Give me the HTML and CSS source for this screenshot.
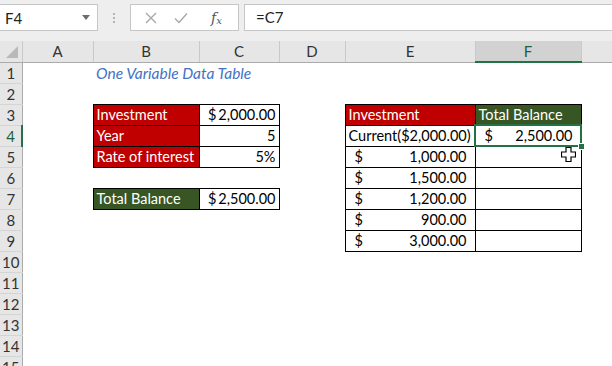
FILE: index.html
```html
<!doctype html>
<html>
  <head>
    <meta charset="utf-8">
    <title>One Variable Data Table</title>
    <link rel="stylesheet" href="styles.css">
  </head>
  <body>
    <div class="formula-bar">
      <div class="name-box">
        <span>F4</span>
        <svg class="caret" width="8" height="5" viewBox="0 0 8 5"><polygon points="0,0 8,0 4,5" fill="#6d6d6d"/></svg>
      </div>
      <div class="grip"><i></i><i></i><i></i></div>
      <div class="fx-buttons">
        <svg width="12" height="12" viewBox="0 0 12 12"><path d="M1 1L11 11M11 1L1 11" stroke="#a8a8a8" stroke-width="1.4" fill="none"/></svg>
        <svg width="14" height="12" viewBox="0 0 14 12"><path d="M1 6.5L5 10.5L13 1.5" stroke="#a8a8a8" stroke-width="1.4" fill="none"/></svg>
        <span class="fx">f<sub>x</sub></span>
      </div>
      <div class="formula">=C7</div>
    </div>

    <table class="sheet">
      <colgroup>
        <col class="c-head">
        <col class="c-a">
        <col class="c-b">
        <col class="c-c">
        <col class="c-d">
        <col class="c-e">
        <col class="c-f">
        <col>
      </colgroup>
      <thead>
        <tr>
          <th class="corner"><svg width="12" height="12" viewBox="0 0 12 12"><polygon points="12,0 12,12 0,12" fill="#b9b9b9"/></svg></th>
          <th>A</th><th>B</th><th>C</th><th>D</th><th>E</th><th class="picked">F</th><th class="last"></th>
        </tr>
      </thead>
      <tbody>
        <tr><th>1</th><td></td><td class="title" colspan="2">One Variable Data Table</td><td></td><td></td><td></td><td></td></tr>
        <tr><th>2</th><td></td><td></td><td></td><td></td><td></td><td></td><td></td></tr>
        <tr>
          <th>3</th><td></td>
          <td class="box red">Investment</td><td class="box num money">$<span>2,000.00</span></td>
          <td></td>
          <td class="box red">Investment</td><td class="box green">Total Balance</td><td></td>
        </tr>
        <tr>
          <th class="picked">4</th><td></td>
          <td class="box red">Year</td><td class="box num">5</td>
          <td></td>
          <td class="box">Current($2,000.00)</td>
          <td class="box active"><div class="acct"><span>$</span><span>2,500.00</span></div></td><td></td>
        </tr>
        <tr>
          <th>5</th><td></td>
          <td class="box red">Rate of interest</td><td class="box num">5%</td>
          <td></td>
          <td class="box"><div class="acct"><span>$</span><span>1,000.00</span></div></td><td class="box"></td><td></td>
        </tr>
        <tr>
          <th>6</th><td></td><td></td><td></td><td></td>
          <td class="box"><div class="acct"><span>$</span><span>1,500.00</span></div></td><td class="box"></td><td></td>
        </tr>
        <tr>
          <th>7</th><td></td>
          <td class="box green">Total Balance</td><td class="box num money">$<span>2,500.00</span></td>
          <td></td>
          <td class="box"><div class="acct"><span>$</span><span>1,200.00</span></div></td><td class="box"></td><td></td>
        </tr>
        <tr>
          <th>8</th><td></td><td></td><td></td><td></td>
          <td class="box"><div class="acct"><span>$</span><span>900.00</span></div></td><td class="box"></td><td></td>
        </tr>
        <tr>
          <th>9</th><td></td><td></td><td></td><td></td>
          <td class="box"><div class="acct"><span>$</span><span>3,000.00</span></div></td><td class="box"></td><td></td>
        </tr>
        <tr><th>10</th><td></td><td></td><td></td><td></td><td></td><td></td><td></td></tr>
        <tr><th>11</th><td></td><td></td><td></td><td></td><td></td><td></td><td></td></tr>
        <tr><th>12</th><td></td><td></td><td></td><td></td><td></td><td></td><td></td></tr>
        <tr><th>13</th><td></td><td></td><td></td><td></td><td></td><td></td><td></td></tr>
        <tr><th>14</th><td></td><td></td><td></td><td></td><td></td><td></td><td></td></tr>
        <tr><th>15</th><td></td><td></td><td></td><td></td><td></td><td></td><td></td></tr>
      </tbody>
    </table>

    <svg class="pointer" width="15" height="15" viewBox="0 0 15 15">
      <path d="M5 0.5H10V5H14.5V10H10V14.5H5V10H0.5V5H5Z" fill="#fff" stroke="#000" stroke-width="1.2"/>
    </svg>
  </body>
</html>
```

FILE: styles.css
```css
html, body {
    margin: 0;
    padding: 0;
    background: #fff;
    overflow: hidden;
}
body {
    font-family: Lato, "Liberation Sans", sans-serif;
    font-size: 14.5px;
    color: #000;
    position: relative;
    width: 612px;
    height: 366px;
}

/* formula bar */
.formula-bar {
    background: #eeeeee;
    height: 41px;
    box-sizing: border-box;
    padding-top: 4px;
    display: flex;
    align-items: flex-start;
    font-size: 15px;
}
.name-box {
    width: 98px;
    height: 27px;
    box-sizing: border-box;
    background: #fff;
    border: 1px solid #c6c6c6;
    border-left: none;
    display: flex;
    align-items: center;
    justify-content: space-between;
    padding: 0 7px 0 5px;
    color: #222;
}
.grip {
    width: 32px;
    height: 27px;
    display: flex;
    flex-direction: column;
    align-items: center;
    justify-content: center;
    gap: 2px;
}
.grip i {
    display: block;
    width: 2px;
    height: 2px;
    background: #b3b3b3;
}
.fx-buttons {
    width: 109px;
    height: 27px;
    box-sizing: border-box;
    background: #fff;
    border: 1px solid #c6c6c6;
    display: flex;
    align-items: center;
    padding-left: 14px;
}
.fx-buttons svg:first-child {
    margin-right: 17px;
}
.fx-buttons svg:nth-child(2) {
    margin-right: 23px;
}
.fx {
    font-family: "DejaVu Serif", serif;
    font-style: italic;
    font-size: 14px;
    color: #555;
}
.fx sub {
    font-size: 10px;
    vertical-align: -1px;
}
.formula {
    flex: 1;
    margin-left: 5px;
    height: 27px;
    box-sizing: border-box;
    background: #fff;
    border: 1px solid #c6c6c6;
    border-right: none;
    padding-left: 11px;
    line-height: 25px;
    color: #222;
}

/* sheet */
.sheet {
    table-layout: fixed;
    border-collapse: collapse;
    width: 612px;
}
.c-head { width: 22px; }
.c-a { width: 71px; }
.c-b { width: 106px; }
.c-c { width: 80px; }
.c-d { width: 66px; }
.c-e { width: 130px; }
.c-f { width: 106px; }

.sheet th {
    background: #e6e6e6;
    font-weight: normal;
    font-size: 15px;
    color: #333;
    padding: 0;
    text-align: center;
}
.sheet thead th {
    height: 20px;
    border-left: 1px solid #c9c9c9;
    border-bottom: 1px solid #ababab;
}
.sheet thead th.corner {
    border-left: none;
    text-align: right;
    vertical-align: bottom;
    line-height: 0;
}
.corner svg {
    margin: 0 4px 4px 0;
}
.sheet thead th.picked {
    background: #d2d2d2;
    color: #215f3b;
    border-bottom: 2px solid #217346;
}
.sheet tbody th {
    height: 20px;
    border-right: 1px solid #ababab;
    border-bottom: 1px solid #d4d4d4;
}
.sheet tbody th.picked {
    color: #215f3b;
    border-right: 2px solid #217346;
}
.sheet td {
    padding: 0 3px;
    white-space: nowrap;
    overflow: visible;
}

.title {
    color: #4472c4;
    font-style: italic;
    font-size: 15.5px;
}
.box {
    border: 1px solid #000;
}
.red {
    background: #c00000;
    color: #fff;
}
.green {
    background: #375623;
    color: #fff;
}
.num {
    text-align: right;
}
.money {
    padding-right: 8px;
}
.money span {
    margin-left: 2px;
}
.acct {
    display: flex;
    justify-content: space-between;
    padding: 0 5px 0 6px;
}
.active {
    position: relative;
    outline: 2px solid #217346;
    outline-offset: -1px;
}
.active::after {
    content: "";
    position: absolute;
    right: -4px;
    bottom: -4px;
    width: 5px;
    height: 5px;
    background: #217346;
    border: 1px solid #fff;
}

.pointer {
    position: absolute;
    left: 561px;
    top: 147px;
}
```
